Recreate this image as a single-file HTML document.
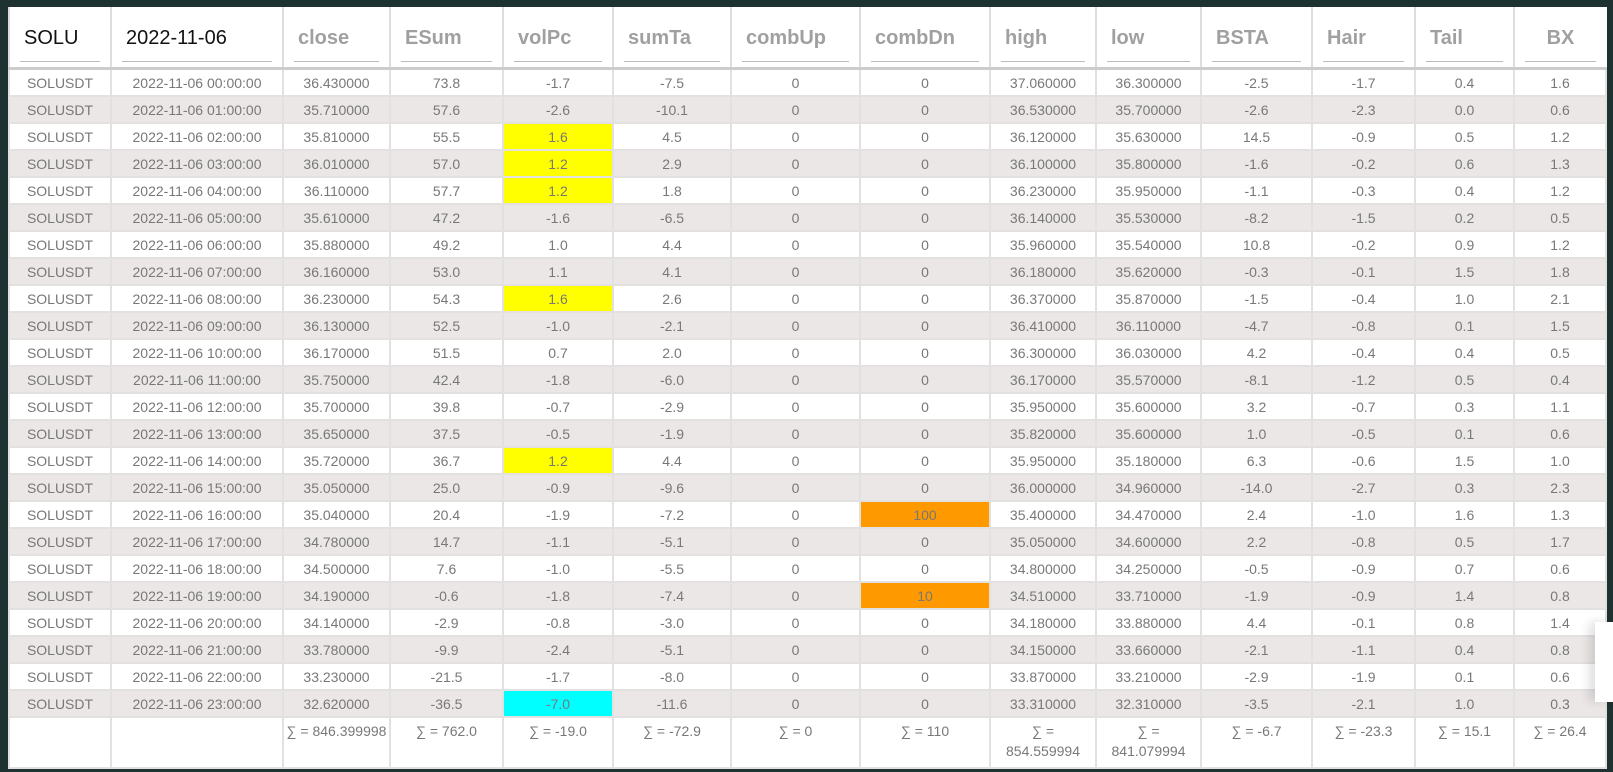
<!DOCTYPE html><html><head><style>
body{margin:0;width:1613px;height:772px;background:#1f3232;overflow:hidden;font-family:"Liberation Sans",sans-serif;position:relative}
table{position:absolute;left:8px;top:7px;width:1597px;border-collapse:collapse;table-layout:fixed;background:#fff}
th{height:60px;border-left:2px solid #ddd;border-bottom:3px solid #ccc;text-align:left;padding:0 10px;font-size:20px;font-weight:bold;color:#a0a0a0;vertical-align:top}
th div{border-bottom:1px solid #bbb;padding:20px 4px 0 4px;height:34px;box-sizing:content-box}
th.k{color:#111;font-weight:normal}
td{height:25px;border:2px solid #e3e1e0;text-align:center;font-size:14px;color:#787878;padding:0}
tr:nth-child(even) td{background:#ebe7e6}
td.y{background:#ffff00!important}td.c{background:#00ffff!important}td.o{background:#ff9900!important}
tr.s td{height:46px;vertical-align:top;padding-top:3px;background:#fff!important;line-height:20px}
.pop{position:absolute;left:1595px;top:622px;width:18px;height:80px;background:#fff;box-shadow:-6px 0 10px rgba(0,0,0,.12)}
</style></head><body>
<table>
<colgroup><col style="width:102px"><col style="width:172px"><col style="width:107px"><col style="width:113px"><col style="width:110px"><col style="width:118px"><col style="width:129px"><col style="width:130px"><col style="width:106px"><col style="width:105px"><col style="width:111px"><col style="width:103px"><col style="width:99px"><col style="width:92px"></colgroup>
<thead><tr><th class="k"><div>SOLU</div></th><th class="k"><div>2022-11-06</div></th><th><div>close</div></th><th><div>ESum</div></th><th><div>volPc</div></th><th><div>sumTa</div></th><th><div>combUp</div></th><th><div>combDn</div></th><th><div>high</div></th><th><div>low</div></th><th><div>BSTA</div></th><th><div>Hair</div></th><th><div>Tail</div></th><th style="text-align:center"><div>BX</div></th></tr></thead>
<tbody>
<tr><td>SOLUSDT</td><td>2022-11-06 00:00:00</td><td>36.430000</td><td>73.8</td><td>-1.7</td><td>-7.5</td><td>0</td><td>0</td><td>37.060000</td><td>36.300000</td><td>-2.5</td><td>-1.7</td><td>0.4</td><td>1.6</td></tr>
<tr><td>SOLUSDT</td><td>2022-11-06 01:00:00</td><td>35.710000</td><td>57.6</td><td>-2.6</td><td>-10.1</td><td>0</td><td>0</td><td>36.530000</td><td>35.700000</td><td>-2.6</td><td>-2.3</td><td>0.0</td><td>0.6</td></tr>
<tr><td>SOLUSDT</td><td>2022-11-06 02:00:00</td><td>35.810000</td><td>55.5</td><td class="y">1.6</td><td>4.5</td><td>0</td><td>0</td><td>36.120000</td><td>35.630000</td><td>14.5</td><td>-0.9</td><td>0.5</td><td>1.2</td></tr>
<tr><td>SOLUSDT</td><td>2022-11-06 03:00:00</td><td>36.010000</td><td>57.0</td><td class="y">1.2</td><td>2.9</td><td>0</td><td>0</td><td>36.100000</td><td>35.800000</td><td>-1.6</td><td>-0.2</td><td>0.6</td><td>1.3</td></tr>
<tr><td>SOLUSDT</td><td>2022-11-06 04:00:00</td><td>36.110000</td><td>57.7</td><td class="y">1.2</td><td>1.8</td><td>0</td><td>0</td><td>36.230000</td><td>35.950000</td><td>-1.1</td><td>-0.3</td><td>0.4</td><td>1.2</td></tr>
<tr><td>SOLUSDT</td><td>2022-11-06 05:00:00</td><td>35.610000</td><td>47.2</td><td>-1.6</td><td>-6.5</td><td>0</td><td>0</td><td>36.140000</td><td>35.530000</td><td>-8.2</td><td>-1.5</td><td>0.2</td><td>0.5</td></tr>
<tr><td>SOLUSDT</td><td>2022-11-06 06:00:00</td><td>35.880000</td><td>49.2</td><td>1.0</td><td>4.4</td><td>0</td><td>0</td><td>35.960000</td><td>35.540000</td><td>10.8</td><td>-0.2</td><td>0.9</td><td>1.2</td></tr>
<tr><td>SOLUSDT</td><td>2022-11-06 07:00:00</td><td>36.160000</td><td>53.0</td><td>1.1</td><td>4.1</td><td>0</td><td>0</td><td>36.180000</td><td>35.620000</td><td>-0.3</td><td>-0.1</td><td>1.5</td><td>1.8</td></tr>
<tr><td>SOLUSDT</td><td>2022-11-06 08:00:00</td><td>36.230000</td><td>54.3</td><td class="y">1.6</td><td>2.6</td><td>0</td><td>0</td><td>36.370000</td><td>35.870000</td><td>-1.5</td><td>-0.4</td><td>1.0</td><td>2.1</td></tr>
<tr><td>SOLUSDT</td><td>2022-11-06 09:00:00</td><td>36.130000</td><td>52.5</td><td>-1.0</td><td>-2.1</td><td>0</td><td>0</td><td>36.410000</td><td>36.110000</td><td>-4.7</td><td>-0.8</td><td>0.1</td><td>1.5</td></tr>
<tr><td>SOLUSDT</td><td>2022-11-06 10:00:00</td><td>36.170000</td><td>51.5</td><td>0.7</td><td>2.0</td><td>0</td><td>0</td><td>36.300000</td><td>36.030000</td><td>4.2</td><td>-0.4</td><td>0.4</td><td>0.5</td></tr>
<tr><td>SOLUSDT</td><td>2022-11-06 11:00:00</td><td>35.750000</td><td>42.4</td><td>-1.8</td><td>-6.0</td><td>0</td><td>0</td><td>36.170000</td><td>35.570000</td><td>-8.1</td><td>-1.2</td><td>0.5</td><td>0.4</td></tr>
<tr><td>SOLUSDT</td><td>2022-11-06 12:00:00</td><td>35.700000</td><td>39.8</td><td>-0.7</td><td>-2.9</td><td>0</td><td>0</td><td>35.950000</td><td>35.600000</td><td>3.2</td><td>-0.7</td><td>0.3</td><td>1.1</td></tr>
<tr><td>SOLUSDT</td><td>2022-11-06 13:00:00</td><td>35.650000</td><td>37.5</td><td>-0.5</td><td>-1.9</td><td>0</td><td>0</td><td>35.820000</td><td>35.600000</td><td>1.0</td><td>-0.5</td><td>0.1</td><td>0.6</td></tr>
<tr><td>SOLUSDT</td><td>2022-11-06 14:00:00</td><td>35.720000</td><td>36.7</td><td class="y">1.2</td><td>4.4</td><td>0</td><td>0</td><td>35.950000</td><td>35.180000</td><td>6.3</td><td>-0.6</td><td>1.5</td><td>1.0</td></tr>
<tr><td>SOLUSDT</td><td>2022-11-06 15:00:00</td><td>35.050000</td><td>25.0</td><td>-0.9</td><td>-9.6</td><td>0</td><td>0</td><td>36.000000</td><td>34.960000</td><td>-14.0</td><td>-2.7</td><td>0.3</td><td>2.3</td></tr>
<tr><td>SOLUSDT</td><td>2022-11-06 16:00:00</td><td>35.040000</td><td>20.4</td><td>-1.9</td><td>-7.2</td><td>0</td><td class="o">100</td><td>35.400000</td><td>34.470000</td><td>2.4</td><td>-1.0</td><td>1.6</td><td>1.3</td></tr>
<tr><td>SOLUSDT</td><td>2022-11-06 17:00:00</td><td>34.780000</td><td>14.7</td><td>-1.1</td><td>-5.1</td><td>0</td><td>0</td><td>35.050000</td><td>34.600000</td><td>2.2</td><td>-0.8</td><td>0.5</td><td>1.7</td></tr>
<tr><td>SOLUSDT</td><td>2022-11-06 18:00:00</td><td>34.500000</td><td>7.6</td><td>-1.0</td><td>-5.5</td><td>0</td><td>0</td><td>34.800000</td><td>34.250000</td><td>-0.5</td><td>-0.9</td><td>0.7</td><td>0.6</td></tr>
<tr><td>SOLUSDT</td><td>2022-11-06 19:00:00</td><td>34.190000</td><td>-0.6</td><td>-1.8</td><td>-7.4</td><td>0</td><td class="o">10</td><td>34.510000</td><td>33.710000</td><td>-1.9</td><td>-0.9</td><td>1.4</td><td>0.8</td></tr>
<tr><td>SOLUSDT</td><td>2022-11-06 20:00:00</td><td>34.140000</td><td>-2.9</td><td>-0.8</td><td>-3.0</td><td>0</td><td>0</td><td>34.180000</td><td>33.880000</td><td>4.4</td><td>-0.1</td><td>0.8</td><td>1.4</td></tr>
<tr><td>SOLUSDT</td><td>2022-11-06 21:00:00</td><td>33.780000</td><td>-9.9</td><td>-2.4</td><td>-5.1</td><td>0</td><td>0</td><td>34.150000</td><td>33.660000</td><td>-2.1</td><td>-1.1</td><td>0.4</td><td>0.8</td></tr>
<tr><td>SOLUSDT</td><td>2022-11-06 22:00:00</td><td>33.230000</td><td>-21.5</td><td>-1.7</td><td>-8.0</td><td>0</td><td>0</td><td>33.870000</td><td>33.210000</td><td>-2.9</td><td>-1.9</td><td>0.1</td><td>0.6</td></tr>
<tr><td>SOLUSDT</td><td>2022-11-06 23:00:00</td><td>32.620000</td><td>-36.5</td><td class="c">-7.0</td><td>-11.6</td><td>0</td><td>0</td><td>33.310000</td><td>32.310000</td><td>-3.5</td><td>-2.1</td><td>1.0</td><td>0.3</td></tr>
<tr class="s"><td></td><td></td><td>∑ = 846.399998</td><td>∑ = 762.0</td><td>∑ = -19.0</td><td>∑ = -72.9</td><td>∑ = 0</td><td>∑ = 110</td><td>∑ =<br>854.559994</td><td>∑ =<br>841.079994</td><td>∑ = -6.7</td><td>∑ = -23.3</td><td>∑ = 15.1</td><td>∑ = 26.4</td></tr>
</tbody></table>
<div class="pop"></div>
</body></html>
